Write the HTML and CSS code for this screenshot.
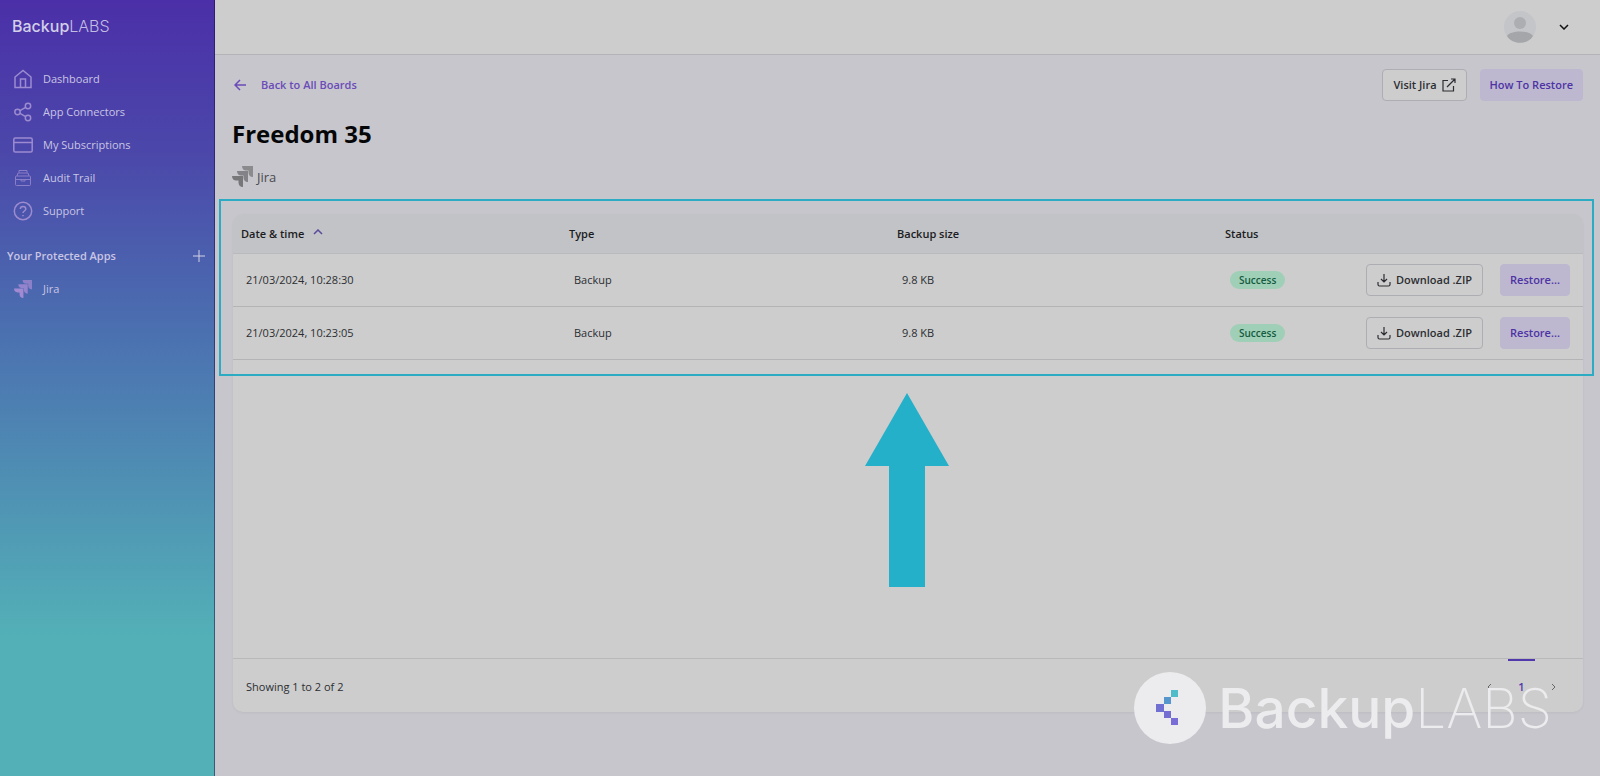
FILE: index.html
```html
<!DOCTYPE html>
<html lang="en">
  <head>
    <meta charset="UTF-8" />
    <meta name="viewport" content="width=device-width, initial-scale=1.0" />
    <title>Freedom 35 - BackupLABS</title>
    <link rel="stylesheet" href="styles.css">
  </head>
  <body>
    <!-- shared shapes -->
    <svg class="defs" width="0" height="0" aria-hidden="true">
      <symbol id="jira" viewBox="0 0 21 21">
        <path d="M10 0h11v11c-3 0-4.500-2-4.500-4.500V4.500H14C12 4.500 10 3 10 0z" opacity="0.75" />
        <path d="M5 5h11v11c-3 0-4.500-2-4.500-4.500V9.500H9C7 9.500 5 8 5 5z" opacity="0.85" />
        <path d="M0 10h11v11c-3 0-4.500-2-4.500-4.500v-2H4C2 14.500 0 13 0 10z" />
      </symbol>
      <symbol id="download" viewBox="0 0 14 14">
        <path d="M7 1v8M4 6l3 3 3-3M1 9v2.500a1.500 1.500 0 0 0 1.500 1.500h9a1.500 1.500 0 0 0 1.500-1.500V9" />
      </symbol>
    </svg>

    <div class="layout">
      <aside class="sidebar">
        <a class="logo" href="#"><b>Backup</b>LABS</a>
        <nav>
          <a href="#">
            <svg class="icon" viewBox="0 0 20 20"><path d="M2 8l8-6.500L18 8v10.500H2zM7.500 18V10h5v8" /></svg>
            Dashboard
          </a>
          <a href="#">
            <svg class="icon" viewBox="0 0 20 20"><circle cx="4.500" cy="10" r="2.700" /><circle cx="15" cy="4" r="2.700" /><circle cx="15" cy="16" r="2.700" /><path d="M7 8.700l5.600-3.300M7 11.300l5.600 3.300" /></svg>
            App Connectors
          </a>
          <a href="#">
            <svg class="icon" viewBox="0 0 20 20"><rect x="0.800" y="3" width="18.400" height="14" rx="1.500" /><path d="M0.500 7.500h19" /></svg>
            My Subscriptions
          </a>
          <a href="#">
            <svg class="icon thin" viewBox="0 0 20 20"><rect x="2.500" y="8" width="15" height="9.500" rx="1" /><path d="M4 8l1-3h10l1 3M6 4.500V2.500h8v2M2.500 11.500h15M8 11.500v1.500h4v-1.500" /></svg>
            Audit Trail
          </a>
          <a href="#">
            <svg class="icon" viewBox="0 0 20 20"><circle cx="10" cy="10" r="8.700" /><path d="M7.300 8c0-3.500 5.500-3.500 5.500 0 0 2-2.800 2-2.800 4M10 14v1.300" /></svg>
            Support
          </a>
        </nav>
        <div class="apps-title">
          <span>Your Protected Apps</span>
          <button class="add" type="button" aria-label="Add app">
            <svg width="12" height="12" viewBox="0 0 12 12"><path d="M6 0v12M0 6h12" /></svg>
          </button>
        </div>
        <nav>
          <a href="#"><svg class="jira-small"><use href="#jira" /></svg>Jira</a>
        </nav>
      </aside>

      <div class="content">
        <header class="topbar">
          <svg class="avatar" viewBox="0 0 32 32">
            <circle cx="16" cy="16" r="16" fill="#c3c5c8" />
            <circle cx="16" cy="12" r="6" fill="#acaeb2" />
            <path d="M3 25c3-6 23-6 26 0-5 9-21 9-26 0z" fill="#a4a6aa" />
          </svg>
          <button class="menu" type="button" aria-label="Account menu">
            <svg width="10" height="6" viewBox="0 0 10 6"><path d="M1 1l4 4 4-4" /></svg>
          </button>
        </header>

        <main>
          <div class="toolbar">
            <a class="back" href="#">
              <svg width="12" height="12" viewBox="0 0 12 12"><path d="M12 6H1M6 1L1 6l5 5" /></svg>
              Back to All Boards
            </a>
            <div class="actions">
              <button class="btn" type="button">
                Visit Jira
                <svg width="14" height="14" viewBox="0 0 14 14"><path d="M6 2.500H1v10.500h10.500V8M9 1h4v4M13 1L5 9" /></svg>
              </button>
              <button class="btn primary" type="button">How To Restore</button>
            </div>
          </div>

          <h1>Freedom 35</h1>
          <div class="app-name"><svg width="21" height="21"><use href="#jira" /></svg>Jira</div>

          <section class="card">
            <div class="table-wrap">
              <table>
                <thead>
                  <tr>
                    <th>Date &amp; time <svg class="sort" width="10" height="6" viewBox="0 0 10 6"><path d="M1 5l4-4 4 4" /></svg></th>
                    <th>Type</th>
                    <th>Backup size</th>
                    <th>Status</th>
                    <th class="row-actions"></th>
                  </tr>
                </thead>
                <tbody>
                  <tr>
                    <td>21/03/2024, 10:28:30</td>
                    <td>Backup</td>
                    <td>9.8 KB</td>
                    <td><span class="badge">Success</span></td>
                    <td>
                      <div class="buttons">
                        <button class="btn" type="button"><svg width="14" height="14"><use href="#download" /></svg>Download .ZIP</button>
                        <button class="btn primary" type="button">Restore...</button>
                      </div>
                    </td>
                  </tr>
                  <tr>
                    <td>21/03/2024, 10:23:05</td>
                    <td>Backup</td>
                    <td>9.8 KB</td>
                    <td><span class="badge">Success</span></td>
                    <td>
                      <div class="buttons">
                        <button class="btn" type="button"><svg width="14" height="14"><use href="#download" /></svg>Download .ZIP</button>
                        <button class="btn primary" type="button">Restore...</button>
                      </div>
                    </td>
                  </tr>
                </tbody>
              </table>
              <div class="highlight">
                <svg class="arrow" width="84" height="194" viewBox="0 0 84 194"><path d="M42 0l42 73H60v121H24V73H0z" /></svg>
              </div>
            </div>

            <footer class="card-footer">
              <span>Showing 1 to 2 of 2</span>
              <div class="pager">
                <a href="#" aria-label="Previous"><svg width="5" height="8" viewBox="0 0 5 8"><path d="M4 1L1 4l3 3" /></svg></a>
                <a class="current" href="#">1</a>
                <a href="#" aria-label="Next"><svg width="5" height="8" viewBox="0 0 5 8"><path d="M1 1l3 3-3 3" /></svg></a>
              </div>
            </footer>
          </section>
        </main>
      </div>
    </div>

    <div class="watermark">
      <svg width="72" height="72" viewBox="0 0 72 72">
        <circle cx="36" cy="36" r="36" fill="#ececee" />
        <rect x="37" y="18" width="7" height="7" fill="#4fbcc9" />
        <rect x="30" y="25" width="7" height="7" fill="#5596cc" />
        <rect x="22" y="32" width="8" height="8" fill="#706fd2" />
        <rect x="30" y="39" width="7" height="7" fill="#746dd2" />
        <rect x="37" y="46" width="7" height="7" fill="#786cd6" />
      </svg>
      <span><b>Backup</b>LABS</span>
    </div>
  </body>
</html>
```
FILE: styles.css
```css
* {
  box-sizing: border-box;
}
body {
  margin: 0;
  font-family: "Open Sans", "Noto Sans", sans-serif;
  font-size: 11px;
  line-height: 16px;
  color: #2c2d32;
  background-color: #c6c6cc;
}
a {
  color: inherit;
  text-decoration: none;
}
button {
  font: inherit;
  cursor: pointer;
}
svg {
  flex: none;
}
.defs {
  position: absolute;
}
.layout {
  display: flex;
  min-height: 100vh;
}

/* sidebar */
.sidebar {
  flex: none;
  width: 215px;
  border-right: 1px solid rgba(20, 10, 60, 0.5);
  color: #c9c5e4;
  background: linear-gradient(#4b2fa8 0%, #4b48aa 20%, #4b6fb0 42%, #53b0b7 82%, #53b0b7 100%);
}
.logo {
  display: block;
  padding: 16px 12px 0;
  height: 62px;
  font-family: Inter, sans-serif;
  font-size: 16px;
  line-height: 20px;
  font-weight: 300;
  color: #c4bde2;
}
.logo b {
  font-weight: 500;
  color: #d3cfe8;
}
.sidebar nav a {
  display: flex;
  align-items: center;
  gap: 10px;
  height: 33px;
  padding-left: 13px;
}
.icon {
  width: 20px;
  height: 20px;
  fill: none;
  stroke: #9c8bd0;
  stroke-width: 1.5;
}
.thin {
  stroke-width: 1;
  opacity: 0.8;
}
.apps-title {
  display: flex;
  align-items: center;
  justify-content: space-between;
  height: 32px;
  margin-top: 13px;
  padding: 0 9px 0 7px;
  font-weight: 600;
}
.add {
  display: flex;
  padding: 0;
  border: 0;
  color: inherit;
  background: none;
}
.add svg {
  stroke: #d3d3e6;
}
.jira-small {
  width: 20px;
  height: 18px;
  fill: #a18ad2;
}

/* top bar */
.content {
  flex: 1;
  display: flex;
  flex-direction: column;
}
.topbar {
  display: flex;
  align-items: center;
  justify-content: flex-end;
  gap: 23px;
  height: 55px;
  padding-right: 31px;
  border-bottom: 1px solid #b4b4b8;
  background-color: #cdcdcd;
}
.avatar {
  width: 32px;
  height: 32px;
}
.menu {
  display: flex;
  padding: 0;
  border: 0;
  background: none;
}
.menu svg {
  fill: none;
  stroke: #111;
  stroke-width: 1.5;
}

main {
  flex: 1;
  display: flex;
  flex-direction: column;
  padding: 14px 17px 64px;
}
.toolbar,
.actions,
.back,
.app-name {
  display: flex;
  align-items: center;
}
.toolbar {
  justify-content: space-between;
}
.actions {
  gap: 13px;
}
.back {
  gap: 15px;
  padding-left: 2px;
  color: #6a4bb8;
  font-weight: 600;
}
.back svg {
  fill: none;
  stroke: #6a4bb8;
  stroke-width: 1.5;
}
.btn {
  display: flex;
  align-items: center;
  gap: 5px;
  height: 32px;
  padding: 0 10px;
  border: 1px solid #adadb4;
  border-radius: 4px;
  color: #2c2d32;
  font-weight: 600;
  white-space: nowrap;
  background-color: #cdcdcd;
}
.btn svg {
  fill: none;
  stroke: #2c2d32;
  stroke-width: 1.2;
}
.primary {
  padding: 0 9px;
  border-color: #bdb8d0;
  color: #4d33a4;
  background-color: #bdb8d0;
}
h1 {
  margin: 17px 0 16px;
  font-size: 24px;
  line-height: 32px;
  color: #050608;
}
.app-name {
  gap: 4px;
  height: 21px;
  margin-bottom: 27px;
  font-size: 13px;
  color: #4a4b50;
  font-weight: 500;
}
.app-name svg {
  fill: #77777a;
}

/* backups table */
.card {
  flex: 1;
  display: flex;
  flex-direction: column;
  justify-content: space-between;
  margin-left: 1px;
  border-radius: 10px;
  background-color: #cdcdcd;
  box-shadow: 0 1px 3px rgba(0, 0, 0, 0.05);
}
.table-wrap {
  position: relative;
}
table {
  width: 100%;
  table-layout: fixed;
  border-collapse: separate;
  border-spacing: 0;
}
th {
  height: 40px;
  padding: 0 8px;
  text-align: left;
  font-weight: 600;
  color: #1b1c22;
  background-color: #c2c3c6;
  border-bottom: 1px solid #b9babd;
}
th:first-child {
  border-top-left-radius: 10px;
}
th:last-child {
  border-top-right-radius: 10px;
}
td {
  height: 53px;
  padding: 0 13px;
  border-bottom: 1px solid #b4b4b7;
}
.sort {
  margin: 0 0 3px 6px;
  fill: none;
  stroke: #5a4a9c;
  stroke-width: 1.5;
}
.row-actions {
  width: 38px;
}
.buttons {
  display: flex;
  justify-content: flex-end;
  gap: 17px;
}
.badge {
  display: inline-block;
  padding: 0 9px;
  border-radius: 9px;
  font-size: 10px;
  line-height: 18px;
  font-weight: 600;
  color: #155c40;
  background-color: #a0cfb8;
}

/* callout over the table */
.highlight {
  position: absolute;
  top: -15px;
  right: -11px;
  bottom: -16px;
  left: -14px;
  border: 2px solid #2bacc2;
  pointer-events: none;
}
.arrow {
  position: absolute;
  top: calc(100% + 19px);
  left: 50%;
  transform: translateX(-50%);
  fill: #25b0c9;
}

.card-footer {
  display: flex;
  justify-content: space-between;
  height: 54px;
  padding: 0 16px 0 13px;
  line-height: 56px;
  border-top: 1px solid #b9b9bc;
}
.pager {
  display: flex;
}
.pager a {
  width: 27px;
  text-align: center;
}
.pager svg {
  fill: none;
  stroke: #66676c;
}
.pager .current {
  margin: 0 5px;
  border-top: 2px solid #5138ac;
  line-height: 52px;
  font-weight: 600;
  color: #5138ac;
}

.watermark {
  position: absolute;
  right: 48px;
  bottom: 32px;
  display: flex;
  align-items: center;
  gap: 12px;
  font-family: Inter, sans-serif;
  font-size: 55px;
  line-height: 72px;
  font-weight: 200;
  color: #ececee;
}
.watermark b {
  font-weight: 500;
}
```
